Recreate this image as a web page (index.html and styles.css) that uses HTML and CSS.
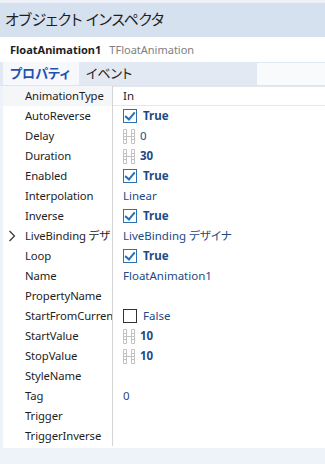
FILE: index.html
```html
<!DOCTYPE html>
<html lang="ja">
<head>
    <meta charset="UTF-8">
    <title>オブジェクト インスペクタ</title>
    <link rel="stylesheet" href="styles.css">
</head>
<body>
    <div class="inspector">
        <header class="title">オブジェクト インスペクタ</header>
        <div class="component">
            <span class="comp-name">FloatAnimation1</span>
            <span class="comp-type">TFloatAnimation</span>
        </div>
        <nav class="tabs">
            <div class="tab active">プロパティ</div>
            <div class="tab">イベント</div>
            <div class="search"></div>
        </nav>
        <div class="grid">
            <div class="row selected">
                <div class="name">AnimationType</div>
                <div class="value plain">In</div>
            </div>
            <div class="row">
                <div class="name">AutoReverse</div>
                <div class="value"><span class="check on"></span><b>True</b></div>
            </div>
            <div class="row">
                <div class="name">Delay</div>
                <div class="value"><svg class="film" width="12" height="15" viewBox="0 0 12 15"><path d="M0.5 0.5h3v14h-3z M8.5 0.5h3v14h-3z M0.5 4.5h3 M0.5 7.5h11 M0.5 10.5h3 M8.5 4.5h3 M8.5 10.5h3" fill="none" stroke="#c2c2c2"/></svg>0</div>
            </div>
            <div class="row">
                <div class="name">Duration</div>
                <div class="value"><svg class="film" width="12" height="15" viewBox="0 0 12 15"><path d="M0.5 0.5h3v14h-3z M8.5 0.5h3v14h-3z M0.5 4.5h3 M0.5 7.5h11 M0.5 10.5h3 M8.5 4.5h3 M8.5 10.5h3" fill="none" stroke="#c2c2c2"/></svg><b>30</b></div>
            </div>
            <div class="row">
                <div class="name">Enabled</div>
                <div class="value"><span class="check on"></span><b>True</b></div>
            </div>
            <div class="row">
                <div class="name">Interpolation</div>
                <div class="value">Linear</div>
            </div>
            <div class="row">
                <div class="name">Inverse</div>
                <div class="value"><span class="check on"></span><b>True</b></div>
            </div>
            <div class="row">
                <div class="name">
                    <svg class="expand" width="8" height="12" viewBox="0 0 8 12"><path d="M1.5 1 L6.5 6 L1.5 11" fill="none" stroke="#333" stroke-width="1.2"/></svg>LiveBinding デザ
                </div>
                <div class="value">LiveBinding デザイナ</div>
            </div>
            <div class="row">
                <div class="name">Loop</div>
                <div class="value"><span class="check on"></span><b>True</b></div>
            </div>
            <div class="row">
                <div class="name">Name</div>
                <div class="value">FloatAnimation1</div>
            </div>
            <div class="row">
                <div class="name">PropertyName</div>
                <div class="value"></div>
            </div>
            <div class="row">
                <div class="name">StartFromCurren</div>
                <div class="value"><span class="check"></span>False</div>
            </div>
            <div class="row">
                <div class="name">StartValue</div>
                <div class="value"><svg class="film" width="12" height="15" viewBox="0 0 12 15"><path d="M0.5 0.5h3v14h-3z M8.5 0.5h3v14h-3z M0.5 4.5h3 M0.5 7.5h11 M0.5 10.5h3 M8.5 4.5h3 M8.5 10.5h3" fill="none" stroke="#c2c2c2"/></svg><b>10</b></div>
            </div>
            <div class="row">
                <div class="name">StopValue</div>
                <div class="value"><svg class="film" width="12" height="15" viewBox="0 0 12 15"><path d="M0.5 0.5h3v14h-3z M8.5 0.5h3v14h-3z M0.5 4.5h3 M0.5 7.5h11 M0.5 10.5h3 M8.5 4.5h3 M8.5 10.5h3" fill="none" stroke="#c2c2c2"/></svg><b>10</b></div>
            </div>
            <div class="row">
                <div class="name">StyleName</div>
                <div class="value"></div>
            </div>
            <div class="row">
                <div class="name">Tag</div>
                <div class="value">0</div>
            </div>
            <div class="row">
                <div class="name">Trigger</div>
                <div class="value"></div>
            </div>
            <div class="row">
                <div class="name">TriggerInverse</div>
                <div class="value"></div>
            </div>
        </div>
    </div>
</body>
</html>
```

FILE: styles.css
```css
* {
    margin: 0;
    padding: 0;
    box-sizing: border-box;
}

body {
    font-family: "Noto Sans", "Noto Sans CJK JP", sans-serif;
    font-size: 11.5px;
    font-feature-settings: "palt";
    color: #1e1e1e;
    background: #eef3f9;
    width: 325px;
    height: 464px;
    overflow: hidden;
}

.inspector {
    border-top: 3px solid #eef2f8;
}

.title {
    height: 34px;
    background: #d6e1ef;
    font-size: 15px;
    letter-spacing: -0.3px;
    line-height: 32px;
    padding-left: 5px;
    color: #1e1e1e;
}

.component {
    height: 25px;
    background: #ffffff;
    display: flex;
    align-items: center;
    gap: 8px;
    padding-left: 10px;
    font-size: 11px;
}

.comp-name {
    font-weight: 700;
}

.comp-type {
    color: #808080;
}

.tabs {
    height: 24px;
    background: #e2e9f2;
    display: flex;
    align-items: stretch;
    border-bottom: 1px solid #dde5ef;
}

.tab {
    font-size: 13px;
    line-height: 23px;
    padding: 0 7px;
    white-space: nowrap;
}

.tab.active {
    margin-left: 3px;
    padding: 0 9px 0 7px;
    background: #f6f8fb;
    color: #1f52b0;
    font-weight: 600;
}

.search {
    margin-left: auto;
    width: 68px;
    margin-top: 1px;
    background: #f9fafc;
}

.grid {
    margin-left: 3px;
    background: #ffffff;
    padding-bottom: 2px;
}

.row {
    display: grid;
    grid-template-columns: 110px 1fr;
    height: 20px;
    line-height: 20px;
}

.name {
    padding-left: 22px;
    font-size: 11.3px;
    letter-spacing: -0.1px;
    white-space: nowrap;
    overflow: hidden;
    border-right: 1px solid #d4d4d4;
    position: relative;
}

.selected .name {
    background: #f5f6f8;
}

.selected .value {
    background: #ffffff;
    border-top: 1px solid #e3e7ee;
    border-bottom: 1px solid #e3e7ee;
    line-height: 18px;
    color: #1e1e1e;
}

.expand {
    position: absolute;
    left: 5px;
    top: 4px;
}

.value {
    padding-left: 10px;
    color: #1d4a86;
    display: flex;
    align-items: center;
    white-space: nowrap;
}

.value b {
    font-weight: 700;
    color: #1d4a86;
}

.check {
    width: 14px;
    height: 14px;
    border: 1px solid #333333;
    margin-right: 6px;
    background: #ffffff;
    position: relative;
}

.check.on {
    border-color: #2c6fb2;
}

.check.on::after {
    content: '';
    position: absolute;
    left: 3px;
    top: 0px;
    width: 4px;
    height: 8px;
    border: solid #2c6fb2;
    border-width: 0 2px 2px 0;
    transform: rotate(40deg);
}

.film {
    margin-right: 5px;
    flex: none;
}
```
